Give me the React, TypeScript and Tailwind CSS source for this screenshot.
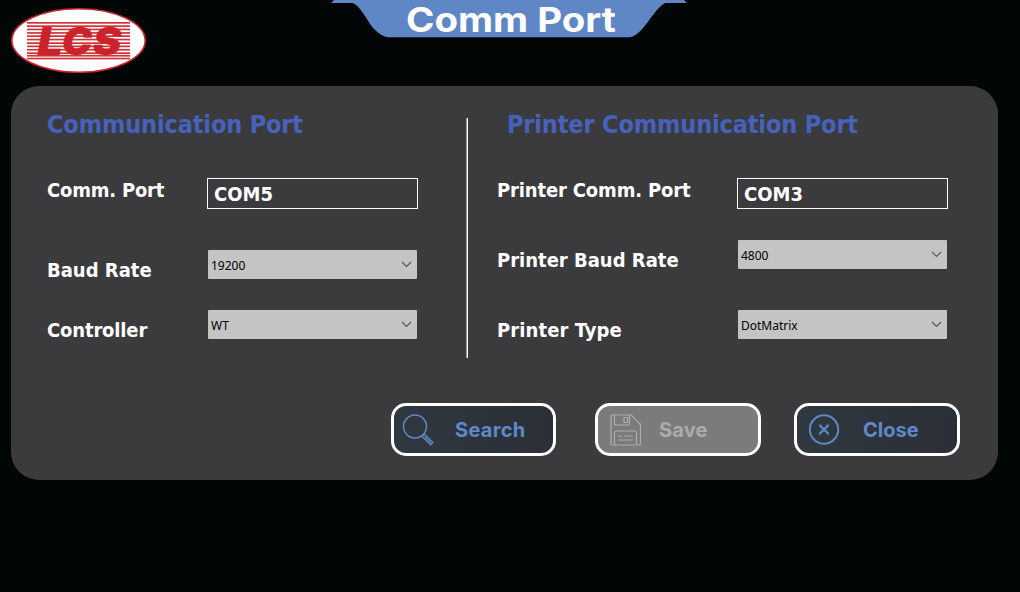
import type { ReactNode } from "react";

const stripes = [22.3, 25.6, 28.9, 32.4, 35.6, 39, 42.6, 45.8, 49.2, 52.6, 55.2, 58];

function Logo() {
  return (
    <svg className="block h-[66px] w-[136px]" viewBox="0 0 136 66" aria-label="LCS">
      <ellipse cx="67.5" cy="33.5" rx="66.7" ry="31.8" fill="#fff" stroke="#cc2229" strokeWidth="1.6" />
      <g fill="#d0343b">
        {stripes.map((y) => (
          <rect key={y} x="16" y={y - 7.3} width="103" height="1.7" />
        ))}
      </g>
      <g
        fill="#cc2229"
        stroke="#cc2229"
        strokeWidth="0.4"
        className="font-['Inter',sans-serif] text-[38px] font-black italic"
      >
        <text x="26.500" y="47.500" textLength="25" lengthAdjust="spacingAndGlyphs">L</text>
        <text x="51" y="47.500" textLength="30" lengthAdjust="spacingAndGlyphs">C</text>
        <text x="82" y="47.500" textLength="28" lengthAdjust="spacingAndGlyphs">S</text>
      </g>
    </svg>
  );
}

function Banner() {
  return (
    <div className="relative h-[38px] w-[358px]">
      <svg className="absolute inset-0 h-full w-full" viewBox="0 0 358 38" aria-hidden="true">
        <path
          d="M4 0H354L357 3H335.500C328 6 320 20 313 28C308 34 303 37.300 298 37.300H60C54 37.300 49 34 43 28C37 20 30 6 23 3H1Z"
          fill="#6087c5"
        />
      </svg>
      <h1 className="relative ml-[76px] w-[209px] text-[34px] leading-[39px] font-bold whitespace-nowrap text-white">
        <span className="inline-block origin-left scale-x-[1.13] font-['Inter',sans-serif]">Comm Port</span>
      </h1>
    </div>
  );
}

function Heading({ children }: { children: ReactNode }) {
  return (
    <h2 className="h-8 text-[25px] leading-[34px] font-bold tracking-[-0.15px] whitespace-nowrap text-[#4662bc]">
      {children}
    </h2>
  );
}

function Label({ children, className }: { children: ReactNode; className: string }) {
  return (
    <span className={`w-40 shrink-0 text-[20px] leading-7 font-bold whitespace-nowrap text-white ${className}`}>
      {children}
    </span>
  );
}

function TextBox({ value }: { value: string }) {
  return (
    <div className="h-[31px] w-[211px] border border-white pl-1.5 text-[20px] leading-[31px] font-bold text-white">
      {value}
    </div>
  );
}

function Select({ value }: { value: string }) {
  return (
    <div className="mx-px flex h-[29px] w-[209px] items-center justify-between rounded-[1px] bg-[#c4c4c4] pr-[5px] pl-[3px] font-['Noto_Sans',sans-serif] text-[12px] text-black">
      <span className="pt-[3px]">{value}</span>
      <svg className="h-[7px] w-[11px]" viewBox="0 0 11 7" fill="none" stroke="#555" strokeWidth="1.1">
        <path d="M1 1L5.500 5.500L10 1" />
      </svg>
    </div>
  );
}

function Button({ icon, children, className }: { icon: ReactNode; children: ReactNode; className: string }) {
  return (
    <button
      className={`flex h-[53px] items-center rounded-[15px] border-[3px] border-white font-['Inter',sans-serif] text-[20px] font-bold ${className}`}
    >
      {icon}
      {children}
    </button>
  );
}

export default function App() {
  return (
    <div className="h-[592px] w-[1020px] overflow-hidden bg-[#020607] font-['DejaVu_Sans_Condensed','DejaVu_Sans',sans-serif] [font-stretch:75%]">
      <header className="flex h-[86px]">
        <div className="w-[330px] pt-[7px] pl-[11px]">
          <Logo />
        </div>
        <Banner />
      </header>

      <main className="ml-[11px] h-[394px] w-[987px] rounded-[28px] bg-[#3b3b3d] pt-[22px]">
        <div className="flex h-[295px]">
          <section className="w-[455px] pl-9">
            <Heading>Communication Port</Heading>
            <div className="mt-[38px] flex h-[31px] items-center">
              <Label className="pb-[7px] tracking-[-0.2px]">Comm. Port</Label>
              <TextBox value="COM5" />
            </div>
            <div className="mt-[41px] flex h-[29px] items-center">
              <Label className="pt-[11px]">Baud Rate</Label>
              <Select value="19200" />
            </div>
            <div className="mt-[31px] flex h-[29px] items-center">
              <Label className="pt-[11px] tracking-[-0.15px]">Controller</Label>
              <Select value="WT" />
            </div>
          </section>

          <div className="mt-[10px] h-60 w-0.5 border-r border-l border-r-white border-l-[#a0a0a0]" />

          <section className="pl-[29px]">
            <div className="pl-2.5">
              <Heading>Printer Communication Port</Heading>
            </div>
            <div className="mt-[38px] flex h-[31px] items-center">
              <Label className="mr-20 pb-[7px] tracking-[-0.15px]">Printer Comm. Port</Label>
              <TextBox value="COM3" />
            </div>
            <div className="mt-[31px] flex h-[29px] items-center">
              <Label className="mr-20 pt-[11px]">Printer Baud Rate</Label>
              <Select value="4800" />
            </div>
            <div className="mt-[41px] flex h-[29px] items-center">
              <Label className="mr-20 pt-[11px] tracking-[0.1px]">Printer Type</Label>
              <Select value="DotMatrix" />
            </div>
          </section>
        </div>

        <div className="flex pl-[380px]">
          <Button
            className="w-[165px] bg-linear-to-r from-[#303840] to-[#2b2f37] pl-2 text-[#5f88c9]"
            icon={
              <svg className="mr-[21px] h-8 w-8 shrink-0" viewBox="0 0 32 32" fill="none" stroke="currentColor" strokeWidth="1.5">
                <circle cx="13" cy="12.500" r="11.500" />
                <path d="M20 22.500L22.500 20L31 28.500L28.500 31ZM22.500 22.500L29 29" strokeWidth="1.2" />
              </svg>
            }
          >
            <span className="tracking-[0.3px]">Search</span>
          </Button>
          <Button
            className="ml-[39px] w-[166px] bg-[#7b7b7b] pl-3 text-[#acacac]"
            icon={
              <svg className="mr-[17px] h-8 w-8 shrink-0" viewBox="0 0 32 32" fill="none" stroke="currentColor" strokeWidth="1.2">
                <path d="M2.500 1H21L30.500 10.500V29Q30.500 31 28.500 31H2.500Q1 31 1 29.500V2.500Q1 1 2.500 1Z" />
                <path d="M4.500 1V9Q4.500 11 6.500 11H17.500Q19.500 11 19.500 9V1M14 3.500H17.500V8.500H14Z" />
                <path d="M4.500 31V19Q4.500 17 6.500 17H24.500Q26.500 17 26.500 19V31M8 22H12M14 22H23M8 26H23" />
              </svg>
            }
          >
            <span className="tracking-[0.2px]">Save</span>
          </Button>
          <Button
            className="ml-[33px] w-[166px] bg-linear-to-r from-[#303840] to-[#2b2f37] pl-[11px] text-[#5f88c9]"
            icon={
              <svg className="mr-[23px] h-8 w-8 shrink-0" viewBox="0 0 32 32" fill="none" stroke="currentColor" strokeWidth="2">
                <circle cx="16" cy="15.500" r="14.200" />
                <path d="M12 11.500L20 19.500M20 11.500L12 19.500" strokeWidth="2.4" strokeLinecap="round" />
              </svg>
            }
          >
            <span>Close</span>
          </Button>
        </div>
      </main>
    </div>
  );
}
